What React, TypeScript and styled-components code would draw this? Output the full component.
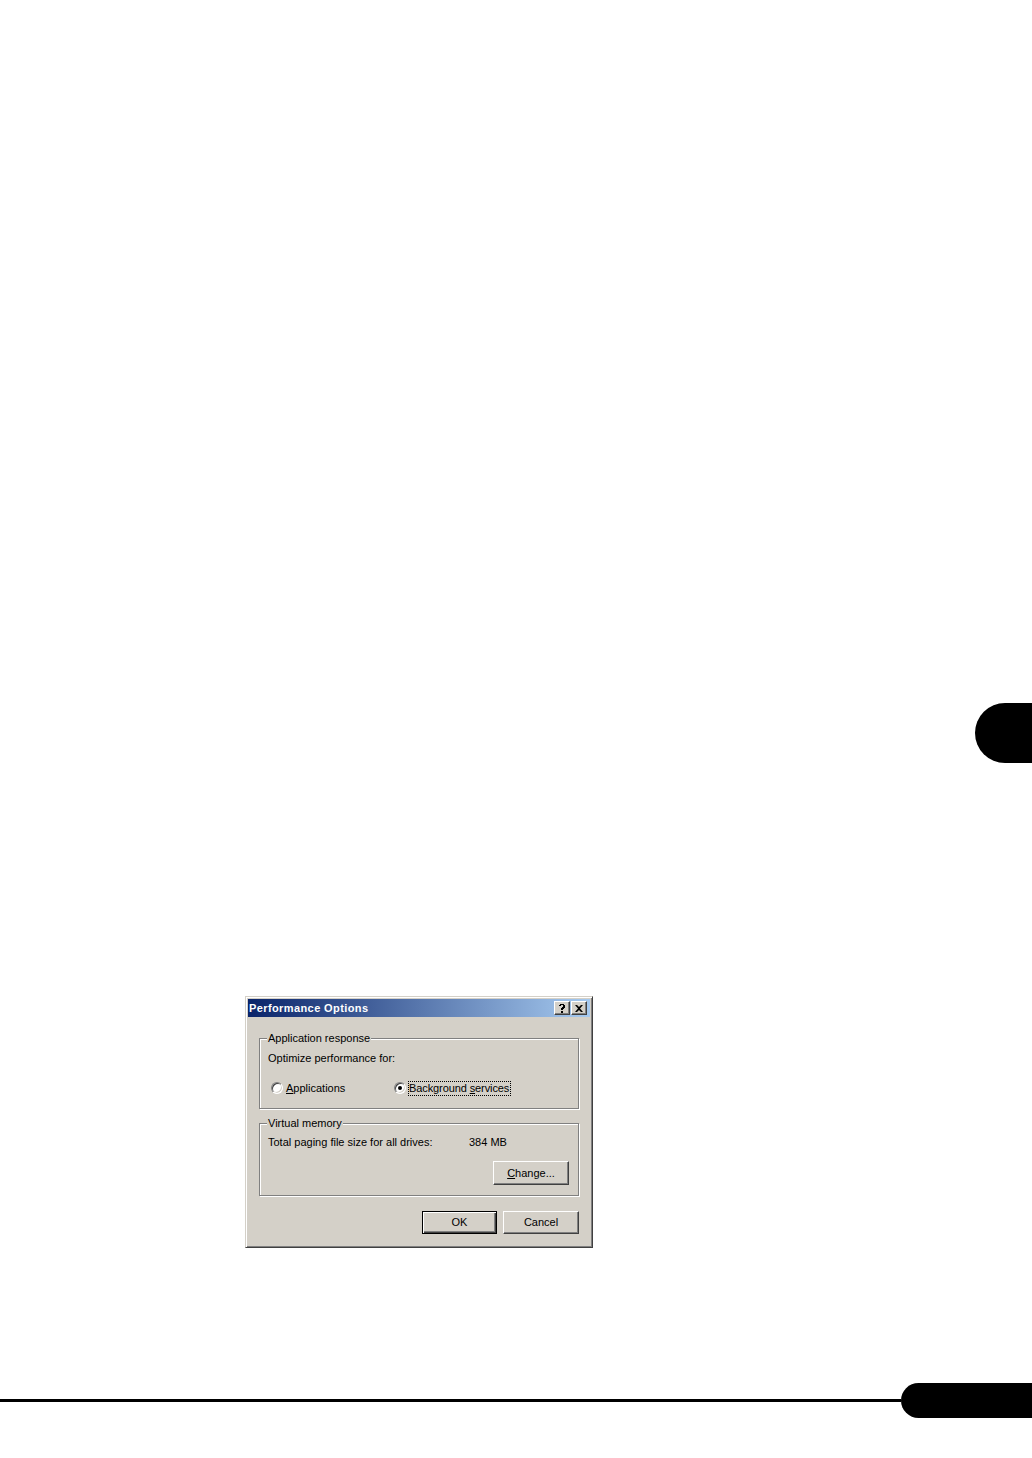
import styled, { createGlobalStyle } from "styled-components";

const GlobalStyle = createGlobalStyle`
  html, body {
    margin: 0;
    padding: 0;
    background: #ffffff;
  }
`;

const Page = styled.div`
  position: relative;
  display: flex;
  flex-direction: column;
  width: 1032px;
  height: 1458px;
  padding-top: 703px;
  box-sizing: border-box;
  background: #ffffff;
  overflow: hidden;
`;

const SideTab = styled.div`
  align-self: flex-end;
  width: 57px;
  height: 60px;
  background: #000000;
  border-radius: 30px 0 0 30px;
`;

const Dialog = styled.div`
  margin-top: 233px;
  margin-left: 245px;
  width: 348px;
  height: 252px;
  box-sizing: border-box;
  background: #d4d0c8;
  border: 1px solid;
  border-color: #d4d0c8 #404040 #404040 #d4d0c8;
  box-shadow: inset 1px 1px 0 #ffffff, inset -1px -1px 0 #808080;
  padding: 2px;
  display: flex;
  flex-direction: column;
  font-family: Tahoma, "Liberation Sans", Arial, sans-serif;
  font-size: 11px;
  line-height: 13px;
  color: #000000;
`;

const TitleBar = styled.div`
  height: 18px;
  display: flex;
  align-items: center;
  justify-content: space-between;
  padding: 0 3px 0 1px;
  background: linear-gradient(to right, #0a246a, #a6caf0);
`;

const TitleText = styled.span`
  color: #ffffff;
  font-weight: bold;
  font-size: 11px;
  letter-spacing: 0.4px;
`;

const TitleButtons = styled.div`
  display: flex;
  gap: 1px;
`;

const TitleButton = styled.div`
  width: 16px;
  height: 14px;
  box-sizing: border-box;
  background: #d4d0c8;
  border: 1px solid;
  border-color: #ffffff #404040 #404040 #ffffff;
  box-shadow: inset -1px -1px 0 #808080;
  display: flex;
  align-items: center;
  justify-content: center;
`;

const Body = styled.div`
  flex: 1;
  display: flex;
  flex-direction: column;
  padding: 15px 11px 0 11px;
`;

const Group = styled.fieldset<{ $top?: number; $height: number }>`
  margin: ${(p) => p.$top ?? 0}px 0 0 0;
  padding: 0 9px 0 8px;
  height: ${(p) => p.$height}px;
  box-sizing: border-box;
  border: 1px solid #808080;
  box-shadow: 1px 1px 0 #ffffff, inset 1px 1px 0 #ffffff;
  display: flex;
  flex-direction: column;
  min-width: 0;
`;

const Legend = styled.legend`
  padding: 0 1px;
  margin-left: -1px;
  background: #d4d0c8;
  line-height: 13px;
`;

const Line = styled.div<{ $top: number }>`
  margin-top: ${(p) => p.$top}px;
  height: 13px;
  display: flex;
  align-items: center;
`;

const RadioRow = styled.div`
  margin-top: 16px;
  height: 14px;
  display: flex;
  align-items: center;
  padding-left: 3px;
`;

const RadioOption = styled.label<{ $width?: number }>`
  display: flex;
  align-items: center;
  width: ${(p) => (p.$width ? `${p.$width}px` : "auto")};
`;

const RadioCircle = styled.span<{ $checked?: boolean }>`
  position: relative;
  width: 12px;
  height: 12px;
  box-sizing: border-box;
  border-radius: 50%;
  border: 1px solid;
  border-color: #808080 #ffffff #ffffff #808080;
  background: #ffffff;
  box-shadow: inset 1px 1px 0 #404040, inset -1px -1px 0 #d4d0c8;
  margin-right: 3px;

  &::after {
    content: "";
    display: ${(p) => (p.$checked ? "block" : "none")};
    position: absolute;
    left: 3px;
    top: 3px;
    width: 4px;
    height: 4px;
    border-radius: 50%;
    background: #000000;
  }
`;

const FocusLabel = styled.span`
  outline: 1px dotted #000000;
  outline-offset: 0;
  padding: 0 1px 0 0;
  line-height: 13px;
  letter-spacing: -0.1px;
`;

const Mnemonic = styled.span`
  text-decoration: underline;
`;

const Value = styled.span`
  margin-left: auto;
  width: 100px;
`;

const ButtonRight = styled.div<{ $top: number }>`
  margin-top: ${(p) => p.$top}px;
  display: flex;
  justify-content: flex-end;
  gap: 6px;
`;

const Button = styled.div<{ $default?: boolean; $height?: number }>`
  width: ${(p) => (p.$default ? 75 : 76)}px;
  height: ${(p) => p.$height ?? 23}px;
  box-sizing: border-box;
  display: flex;
  align-items: center;
  justify-content: center;
  background: #d4d0c8;
  border: 1px solid;
  border-color: ${(p) => (p.$default ? "#000000" : "#ffffff #404040 #404040 #ffffff")};
  box-shadow: ${(p) =>
    p.$default
      ? "inset 1px 1px 0 #ffffff, inset -1px -1px 0 #404040, inset -2px -2px 0 #808080"
      : "inset -1px -1px 0 #808080"};
`;

const Footer = styled.div`
  margin-top: 135px;
  display: flex;
  align-items: center;
`;

const Rule = styled.div`
  flex: 1;
  height: 3px;
  background: #000000;
`;

const Pill = styled.div`
  width: 131px;
  height: 35px;
  background: #000000;
  border-radius: 18px 0 0 18px;
`;

function HelpGlyph() {
  return (
    <svg width="8" height="9" viewBox="0 0 8 9">
      <path d="M1 1h1V0h4v1h1v3H6v1H5v1H3V4h1V3h1V1H3v1H1z" fill="#000" />
      <rect x="3" y="7" width="2" height="2" fill="#000" />
    </svg>
  );
}

function CloseGlyph() {
  return (
    <svg width="8" height="7" viewBox="0 0 8 7">
      <path d="M0 0h2l2 2 2-2h2L5 3.5 8 7H6L4 5 2 7H0l3-3.5z" fill="#000" />
    </svg>
  );
}

export default function App() {
  return (
    <>
      <GlobalStyle />
      <Page>
        <SideTab />
        <Dialog>
          <TitleBar>
            <TitleText>Performance Options</TitleText>
            <TitleButtons>
              <TitleButton>
                <HelpGlyph />
              </TitleButton>
              <TitleButton>
                <CloseGlyph />
              </TitleButton>
            </TitleButtons>
          </TitleBar>
          <Body>
            <Group $height={77}>
              <Legend>Application response</Legend>
              <Line $top={7}>Optimize performance for:</Line>
              <RadioRow>
                <RadioOption $width={123}>
                  <RadioCircle />
                  <span>
                    <Mnemonic>A</Mnemonic>pplications
                  </span>
                </RadioOption>
                <RadioOption>
                  <RadioCircle $checked />
                  <FocusLabel>
                    Background <Mnemonic>s</Mnemonic>ervices
                  </FocusLabel>
                </RadioOption>
              </RadioRow>
            </Group>
            <Group $top={8} $height={79}>
              <Legend>Virtual memory</Legend>
              <Line $top={6}>
                <span>Total paging file size for all drives:</span>
                <Value>384 MB</Value>
              </Line>
              <ButtonRight $top={12}>
                <Button $height={24}>
                  <span>
                    <Mnemonic>C</Mnemonic>hange...
                  </span>
                </Button>
              </ButtonRight>
            </Group>
            <ButtonRight $top={15}>
              <Button $default>OK</Button>
              <Button>Cancel</Button>
            </ButtonRight>
          </Body>
        </Dialog>
        <Footer>
          <Rule />
          <Pill />
        </Footer>
      </Page>
    </>
  );
}
